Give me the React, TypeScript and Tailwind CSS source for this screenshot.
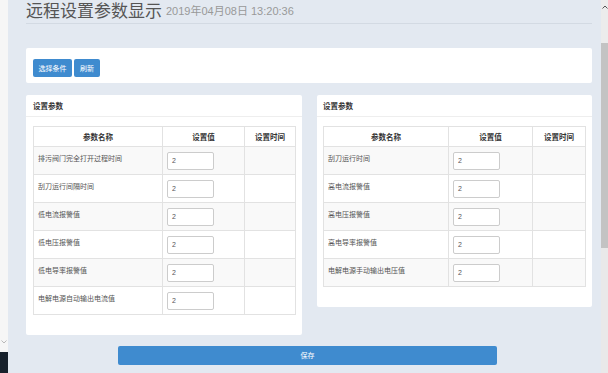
import React from "react";

const leftRows = [
  "排污阀门完全打开过程时间",
  "刮刀运行间隔时间",
  "低电流报警值",
  "低电压报警值",
  "低电导率报警值",
  "电解电源自动输出电流值",
];
const rightRows = [
  "刮刀运行时间",
  "高电流报警值",
  "高电压报警值",
  "高电导率报警值",
  "电解电源手动输出电压值",
];

function ParamTable({ rows, cols }: { rows: string[]; cols: [string, string, string] }) {
  return (
    <table className="border-collapse border border-[#e2e2e2] w-full table-fixed">
      <colgroup>
        <col className={cols[0]} />
        <col className={cols[1]} />
        <col className={cols[2]} />
      </colgroup>
      <thead>
        <tr className="h-[20px] bg-white">
          <th className="border border-[#e2e2e2] text-[7.5px] font-bold text-[#333] text-center align-middle p-0">参数名称</th>
          <th className="border border-[#e2e2e2] text-[7.5px] font-bold text-[#333] text-center align-middle p-0">设置值</th>
          <th className="border border-[#e2e2e2] text-[7.5px] font-bold text-[#333] text-center align-middle p-0">设置时间</th>
        </tr>
      </thead>
      <tbody>
        {rows.map((r, i) => (
          <tr key={r} className={i % 2 === 0 ? "h-[28px] bg-[#f9f9f9]" : "h-[28px] bg-white"}>
            <td className="border border-[#e2e2e2] align-top pt-[6px] pl-[4px] text-[7px] leading-[10px] text-[#555]">{r}</td>
            <td className="border border-[#e2e2e2] align-top pt-[5px] pl-[4px]">
              <div className="w-[47px] h-[18px] bg-white border border-[#ccc] rounded-[2px] flex items-center pl-[4px] text-[7px] text-[#555] font-['Liberation_Sans',sans-serif]">
                2
              </div>
            </td>
            <td className="border border-[#e2e2e2]"></td>
          </tr>
        ))}
      </tbody>
    </table>
  );
}

export default function App() {
  return (
    <div className="w-[608px] h-[373px] flex overflow-hidden font-['Noto_Sans_CJK_SC','Liberation_Sans',sans-serif]">
      <div className="w-[8px] h-full bg-[#f6f6f6] flex flex-col items-center justify-end">
        <svg width="6" height="4" viewBox="0 0 6 4" className="mb-[8px]">
          <path d="M0.5 0.5 L3 3 L5.5 0.5" fill="none" stroke="#aaa" strokeWidth="0.8" />
        </svg>
        <div className="w-full h-[21px] bg-[#17212c]"></div>
      </div>
      <div className="flex-1 h-full bg-[#e3e9f1] pl-[18px] pr-[9px]">
        <div className="h-[24px] border-b border-[#d3dae3] flex items-end pb-[5px] gap-[4px]">
          <span className="text-[17px] leading-none text-[#555]">远程设置参数显示</span>
          <span className="text-[11px] leading-none text-[#999] mb-[1px] font-['Liberation_Sans','Noto_Sans_CJK_SC',sans-serif]">2019年04月08日 13:20:36</span>
        </div>
        <div className="mt-[24px] h-[35px] bg-white rounded-[2px] flex items-start pt-[11px] pl-[7px] gap-[2px]">
          <button className="h-[18px] w-[39px] bg-[#3f8bcf] rounded-[2px] text-white text-[7px] flex items-center justify-center">选择条件</button>
          <button className="h-[18px] w-[26px] bg-[#3f8bcf] rounded-[2px] text-white text-[7px] flex items-center justify-center">刷新</button>
        </div>
        <div className="mt-[12px] flex items-start gap-[15px]">
          <div className="w-[276px] bg-white rounded-[2px] pb-[20px]">
            <div className="h-[22px] border-b border-[#eee] flex items-center pl-[7px] text-[7.5px] font-bold text-[#333]">设置参数</div>
            <div className="px-[7px] pt-[9px]">
              <ParamTable rows={leftRows} cols={["w-[129px]", "w-[82px]", "w-[51px]"]} />
            </div>
          </div>
          <div className="w-[275px] bg-white rounded-[2px] pb-[20px]">
            <div className="h-[22px] border-b border-[#eee] flex items-center pl-[6px] text-[7.5px] font-bold text-[#333]">设置参数</div>
            <div className="pl-[6px] pr-[7px] pt-[9px]">
              <ParamTable rows={rightRows} cols={["w-[125px]", "w-[84px]", "w-[53px]"]} />
            </div>
          </div>
        </div>
        <button className="mt-[11px] ml-[92px] w-[379px] h-[19px] bg-[#3f8bcf] rounded-[2px] text-white text-[7px] flex items-center justify-center">保存</button>
      </div>
      <div className="w-[7px] h-full bg-[#e9e9e9] flex flex-col">
        <div className="h-[43px] bg-[#ececec] flex justify-center pt-[5px]">
          <svg width="6" height="4" viewBox="0 0 6 4">
            <path d="M0.5 3.5 L3 1 L5.5 3.5" fill="none" stroke="#555" strokeWidth="1" />
          </svg>
        </div>
        <div className="h-[205px] bg-[#c3c3c3]"></div>
      </div>
    </div>
  );
}
